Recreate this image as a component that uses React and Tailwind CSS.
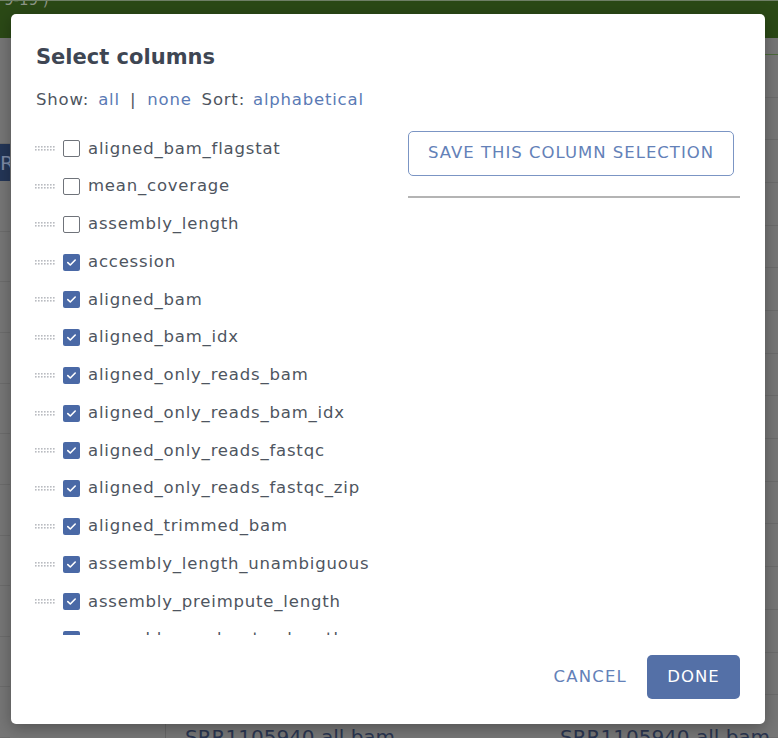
import React from "react";

const items = [
  ["aligned_bam_flagstat", false],
  ["mean_coverage", false],
  ["assembly_length", false],
  ["accession", true],
  ["aligned_bam", true],
  ["aligned_bam_idx", true],
  ["aligned_only_reads_bam", true],
  ["aligned_only_reads_bam_idx", true],
  ["aligned_only_reads_fastqc", true],
  ["aligned_only_reads_fastqc_zip", true],
  ["aligned_trimmed_bam", true],
  ["assembly_length_unambiguous", true],
  ["assembly_preimpute_length", true],
  ["assembly_read_extra_length", true],
];

function Handle() {
  const dots = [];
  for (let i = 0; i < 7; i++) {
    for (let j = 0; j < 2; j++) {
      dots.push(<rect key={i + "-" + j} x={i * 3} y={j * 3} width="1.6" height="1.6" fill="#b9bcc1" />);
    }
  }
  return (
    <svg width="21" height="5" viewBox="0 0 21 5" className="shrink-0 block">
      {dots}
    </svg>
  );
}

function Check({ on }) {
  if (on) {
    return (
      <span className="block w-[17px] h-[17px] shrink-0 rounded-[2px] bg-[#4a69a6] flex items-center justify-center">
        <svg width="11" height="9" viewBox="0 0 11 9" className="block">
          <path d="M1.8 4.6 L4.3 7 L9.2 2" stroke="white" strokeWidth="1.6" fill="none" strokeLinecap="round" strokeLinejoin="round" />
        </svg>
      </span>
    );
  }
  return <span className="block w-[17px] h-[17px] shrink-0 rounded-[2px] border-[1.5px] border-[#6f737a] bg-white" />;
}

export default function App() {
  return (
    <div className="relative w-[778px] h-[738px] overflow-hidden bg-[#767676] font-['DejaVu_Sans',sans-serif]">
      {/* background page */}
      <div className="h-[38px] bg-[#2b4916] border-t border-[#6f7f66] px-1 overflow-hidden">
        <div className="text-[15px] text-[#8d9587] leading-[16px] -mt-[9px]">9-19 )</div>
      </div>
      <div className="flex h-[700px]">
        <div className="w-[10px] flex flex-col">
          <div className="h-[111px] border-b border-[#6c6c6c]" />
          <div className="h-[39px] bg-[#243657] text-[#7d8aa6] text-[20px] leading-[39px] overflow-hidden">R</div>
          {Array.from({ length: 11 }).map((_, i) => (
            <div key={i} className="h-[53px] border-b border-[#6c6c6c]" />
          ))}
        </div>
        <div className="flex-1" />
        <div className="w-[13px] flex flex-col">
          <div className="h-[17px] border-b border-[#4b6a3a]" />
          {Array.from({ length: 16 }).map((_, i) => (
            <div key={i} className="h-[43px] border-b border-[#6c6c6c]" />
          ))}
        </div>
      </div>
      <div className="absolute left-[165px] top-[716px] w-px h-[22px] bg-[#666]" />
      <div className="absolute left-[185px] top-[725px] text-[20px] leading-[24px] text-[#2a3550] underline">SRR1105940.all.bam</div>
      <div className="absolute left-[560px] top-[725px] text-[20px] leading-[24px] text-[#2a3550] underline">SRR1105940.all.bam</div>

      {/* modal */}
      <div className="absolute left-[11px] top-[14px] w-[754px] h-[710px] bg-white rounded-[5px] shadow-[0_4px_16px_rgba(0,0,0,0.3)] flex flex-col px-[25px] pt-[29px] pb-[25px]">
        <h2 className="text-[21px] leading-[28px] font-semibold text-[#3e4653]">Select columns</h2>
        <div className="mt-[16px] text-[16.5px] tracking-[0.8px] leading-[26px] text-[#4e5560] flex items-center">
          <span>Show:</span>
          <span className="ml-[9px] text-[#5a7ab5]">all</span>
          <span className="ml-[10px] text-[#4e5560]">|</span>
          <span className="ml-[11px] text-[#5a7ab5]">none</span>
          <span className="ml-[10px]">Sort:</span>
          <span className="ml-[8px] text-[#5a7ab5]">alphabetical</span>
        </div>
        <div className="mt-[17px] flex gap-[39px]">
          <div className="-ml-[1px] w-[334px] h-[505px] overflow-hidden">
            {items.map(([name, on]) => (
              <div key={name} className="h-[37.75px] flex items-center">
                <Handle />
                <span className="ml-[7px]"><Check on={on} /></span>
                <span className="ml-[8px] text-[16.5px] tracking-[0.8px] text-[#4e5560] whitespace-nowrap">{name}</span>
              </div>
            ))}
          </div>
          <div className="flex-1 pt-[1px]">
            <button className="h-[45px] px-[19px] border border-[#7b95c4] rounded-[5px] text-[16.5px] tracking-[1px] text-[#6381b8]">
              SAVE THIS COLUMN SELECTION
            </button>
            <div className="mt-[20px] h-[2px] bg-[#b4b4b4]" />
          </div>
        </div>
        <div className="mt-auto flex justify-end items-center">
          <button className="text-[16.5px] text-[#6381b8] tracking-[1.2px] mr-[20px]">CANCEL</button>
          <button className="h-[44px] w-[93px] rounded-[5px] bg-[#5470a7] text-white text-[16.5px] tracking-[1px]">DONE</button>
        </div>
      </div>
    </div>
  );
}
